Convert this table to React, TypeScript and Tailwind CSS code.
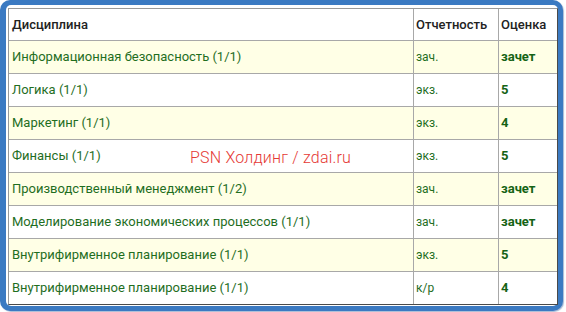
import React from 'react';

type Row = { name: string; report: string; grade: string };

const rows: Row[] = [
  { name: 'Информационная безопасность (1/1)', report: 'зач.', grade: 'зачет' },
  { name: 'Логика (1/1)', report: 'экз.', grade: '5' },
  { name: 'Маркетинг (1/1)', report: 'экз.', grade: '4' },
  { name: 'Финансы (1/1)', report: 'экз.', grade: '5' },
  { name: 'Производственный менеджмент (1/2)', report: 'зач.', grade: 'зачет' },
  { name: 'Моделирование экономических процессов (1/1)', report: 'зач.', grade: 'зачет' },
  { name: 'Внутрифирменное планирование (1/1)', report: 'экз.', grade: '5' },
  { name: 'Внутрифирменное планирование (1/1)', report: 'к/р', grade: '4' },
];

export default function App() {
  return (
    <div className="w-[566px] h-[312px] bg-white font-['Roboto',sans-serif]">
      <div className="w-[563px] h-[311px] rounded-[10px] bg-[#3b7ac2] pl-[6px] pt-[5px] pr-[5px] pb-[5px] shadow-[1px_1px_1px_rgba(60,100,160,0.45)]">
        <div className="relative h-full w-full rounded-[5px] bg-white pl-[2px] pt-[3px]">
          <div className="w-[550px] border border-t-[#9a9a9a] border-l-[#9a9a9a] border-r-[#4a4a4a] border-b-[#4a4a4a]">
            {/* header */}
            <div className="grid grid-cols-[405px_85px_58px] h-[32px] border-b border-[#a8a8a8] bg-white text-[13px] font-medium text-[#222]">
              <div className="flex items-center pl-[3px] border-r border-[#a8a8a8]">Дисциплина</div>
              <div className="flex items-center pl-[2px] border-r border-[#a8a8a8]">Отчетность</div>
              <div className="flex items-center pl-[2px]">Оценка</div>
            </div>
            {rows.map((r, i) => {
              const last = i === rows.length - 1;
              return (
                <div
                  key={i}
                  className={`grid grid-cols-[405px_85px_58px] ${last ? 'h-[32px]' : 'h-[33px] border-b border-[#a8a8a8]'} ${i % 2 === 0 ? 'bg-[#ffffe6]' : 'bg-white'}`}
                >
                  <div className="flex items-center pl-[3px] border-r border-[#a8a8a8] text-[13px] text-[#1f6e1f]">{r.name}</div>
                  <div className="flex items-center pl-[2px] border-r border-[#a8a8a8] text-[12px] text-[#1f6e1f]">{r.report}</div>
                  <div className="flex items-center pl-[2px] text-[13px] font-bold text-[#156315]">{r.grade}</div>
                </div>
              );
            })}
          </div>
          {/* watermark */}
          <div className="absolute left-[184px] top-[141px] text-[16px] font-light tracking-[0.2px] text-[#e53935] whitespace-nowrap">
            PSN Холдинг / zdai.ru
          </div>
        </div>
      </div>
    </div>
  );
}
